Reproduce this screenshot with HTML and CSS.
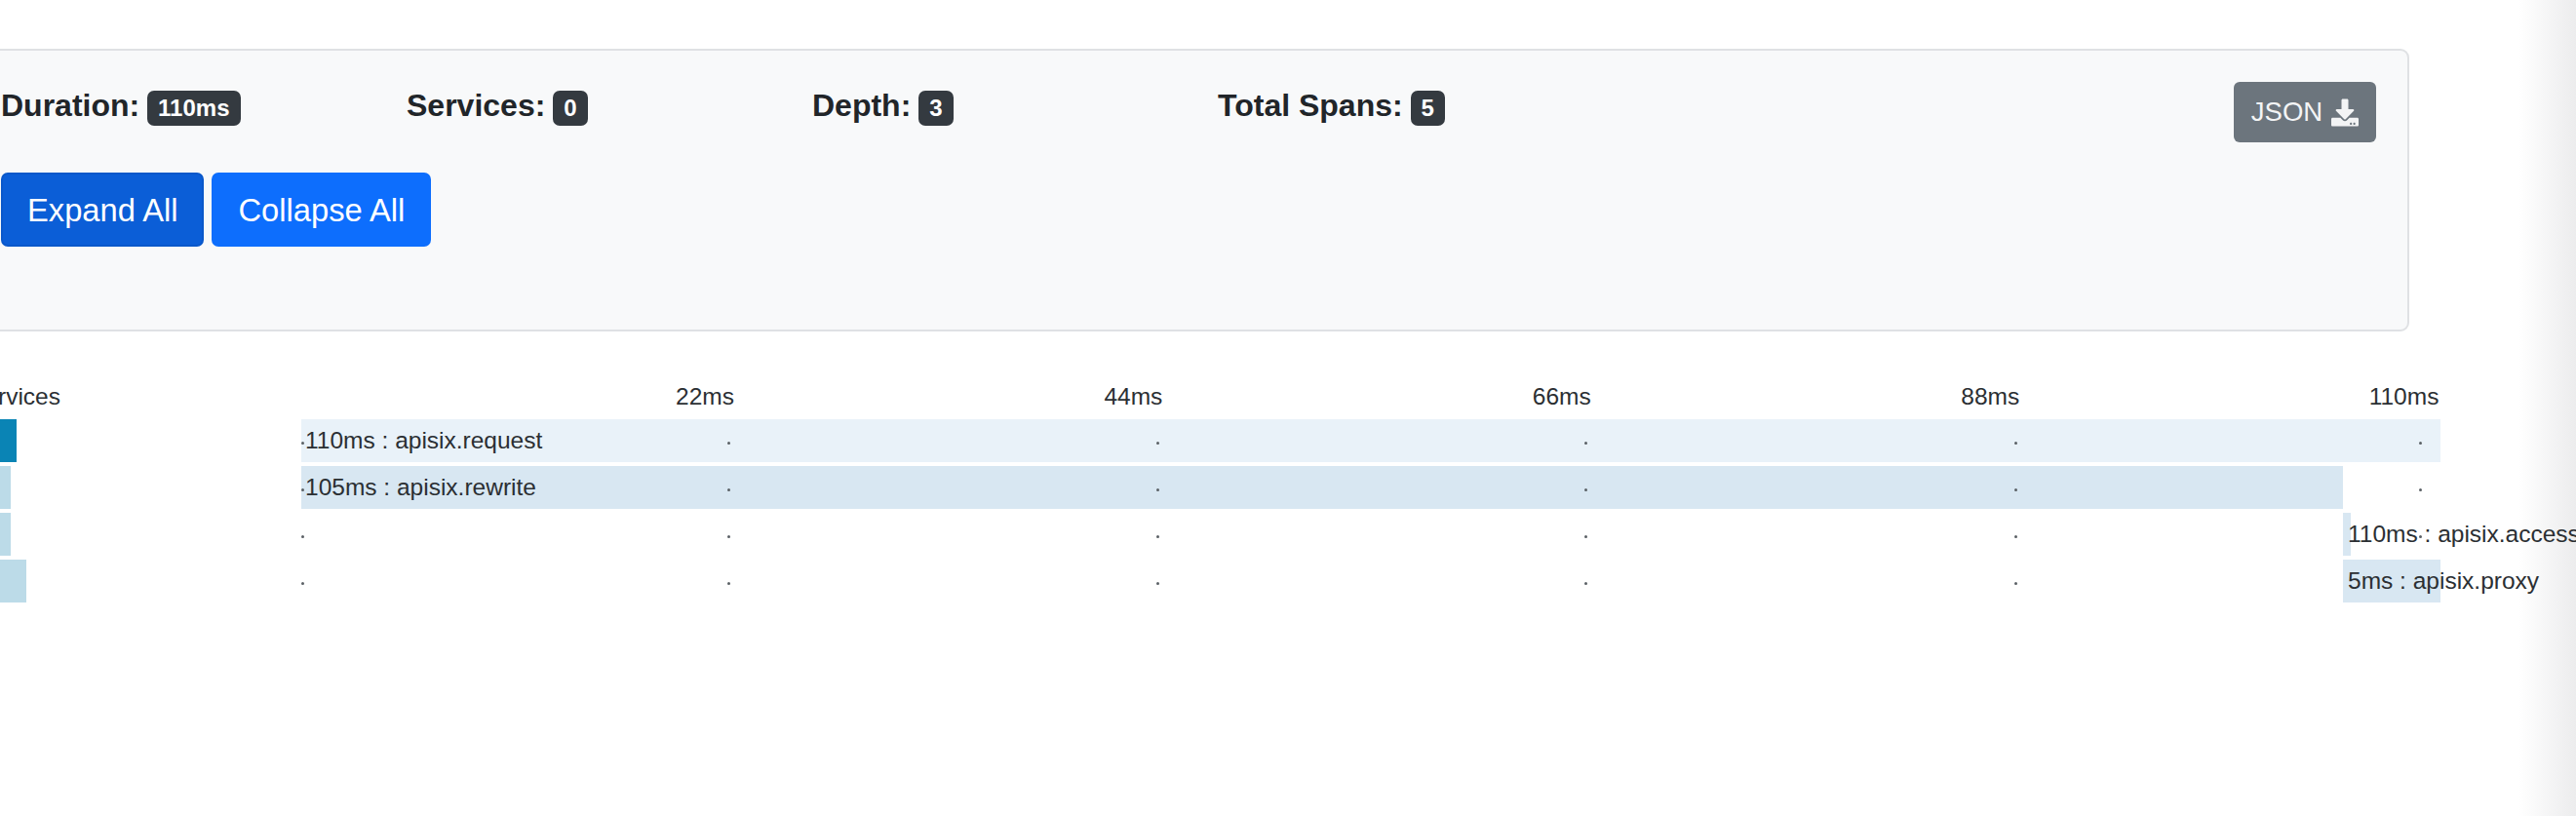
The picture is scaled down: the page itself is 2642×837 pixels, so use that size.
FILE: index.html
```html
<!DOCTYPE html>
<html lang="en">
<head>
<meta charset="utf-8">
<title>Trace</title>
<link rel="stylesheet" href="styles.css">
</head>
<body>
<section class="summary">
  <div class="summary-top">
    <div class="stats">
      <div class="stat">Duration: <span class="badge">110ms</span></div>
      <div class="stat">Services: <span class="badge">0</span></div>
      <div class="stat">Depth: <span class="badge">3</span></div>
      <div class="stat">Total Spans: <span class="badge">5</span></div>
    </div>
    <button class="btn-json">JSON
      <svg class="icon" viewBox="0 0 512 512" aria-hidden="true"><path fill="currentColor" d="M216 0h80c13.3 0 24 10.7 24 24v168h87.7c17.8 0 26.7 21.5 14.1 34.1L269.7 378.3c-7.5 7.5-19.8 7.5-27.3 0L90.1 226.1c-12.6-12.6-3.7-34.1 14.1-34.1H192V24c0-13.3 10.7-24 24-24zm296 376v112c0 13.3-10.7 24-24 24H24c-13.3 0-24-10.7-24-24V376c0-13.3 10.7-24 24-24h146.7l49 49c20.1 20.1 52.5 20.1 72.6 0l49-49H488c13.3 0 24 10.7 24 24zm-124 88c0-11-9-20-20-20s-20 9-20 20 9 20 20 20 20-9 20-20zm64 0c0-11-9-20-20-20s-20 9-20 20 9 20 20 20 20-9 20-20z"/></svg>
    </button>
  </div>
  <div class="actions">
    <button class="btn btn-active">Expand All</button>
    <button class="btn">Collapse All</button>
  </div>
</section>

<section class="timeline">
  <div class="axis">
    <span class="axis-title">Services</span>
    <div class="axis-ticks">
      <span>22ms</span><span>44ms</span><span>66ms</span><span>88ms</span><span class="last">110ms</span>
    </div>
  </div>

  <div class="row">
    <div class="svc"><div class="svc-bar svc-dark" style="width:17px"></div></div>
    <div class="chart">
      <div class="span span-light" style="margin-left:0;width:2194px"></div>
      <i class="dot d1"></i><i class="dot d2"></i><i class="dot d3"></i><i class="dot d4"></i><i class="dot d5"></i><i class="dot d6"></i>
      <span class="label">110ms : apisix.request</span>
    </div>
  </div>

  <div class="row">
    <div class="svc"><div class="svc-bar" style="width:11px"></div></div>
    <div class="chart">
      <div class="span" style="margin-left:0;width:2094px"></div>
      <i class="dot d1"></i><i class="dot d2"></i><i class="dot d3"></i><i class="dot d4"></i><i class="dot d5"></i><i class="dot d6"></i>
      <span class="label">105ms : apisix.rewrite</span>
    </div>
  </div>

  <div class="row">
    <div class="svc"><div class="svc-bar" style="width:11px"></div></div>
    <div class="chart">
      <div class="span" style="margin-left:2094px;width:8px"></div>
      <i class="dot d1"></i><i class="dot d2"></i><i class="dot d3"></i><i class="dot d4"></i><i class="dot d5"></i><i class="dot d6"></i>
      <span class="label label-end">110ms : apisix.access</span>
    </div>
  </div>

  <div class="row">
    <div class="svc"><div class="svc-bar" style="width:27px"></div></div>
    <div class="chart">
      <div class="span" style="margin-left:2094px;width:100px"></div>
      <i class="dot d1"></i><i class="dot d2"></i><i class="dot d3"></i><i class="dot d4"></i><i class="dot d5"></i>
      <span class="label label-end">5ms : apisix.proxy</span>
    </div>
  </div>
</section>
</body>
</html>
```
FILE: styles.css
```css
* { box-sizing: border-box; }

html, body {
  margin: 0;
  height: 100%;
  overflow: hidden;
}

body {
  font-family: "Liberation Sans", Arial, sans-serif;
  color: #2b2f33;
  font-size: 24.5px;
  width: 2642px;
  background: linear-gradient(to right, #fff 2583px, #ececed 2642px);
}

.summary {
  width: 2491px;
  height: 290px;
  margin: 50px 0 0 -20px;
  padding: 31px 32px 0 19px;
  background: #f8f9fa;
  border: 2px solid #dfe1e4;
  border-radius: 9px;
}

.summary-top {
  display: flex;
  justify-content: space-between;
  align-items: flex-start;
}

.stats { display: flex; padding-top: 5px; }

.stat {
  width: 416px;
  font-size: 32px;
  font-weight: 700;
  line-height: 40px;
  white-space: nowrap;
  color: #212529;
}

.badge {
  display: inline-block;
  padding: 6px 11px;
  margin-left: -1px;
  min-width: 34px;
  text-align: center;
  font-size: 24px;
  line-height: 24px;
  color: #fff;
  background: #343a40;
  border-radius: 7px;
  vertical-align: 0;
}

.btn-json {
  display: flex;
  align-items: center;
  justify-content: center;
  gap: 9px;
  width: 146px;
  height: 62px;
  margin-top: 1px;
  padding: 0;
  font: 27.5px "Liberation Sans", Arial, sans-serif;
  color: #f3f4f5;
  background: #6c757d;
  border: 0;
  border-radius: 6px;
}

.icon { width: 28px; height: 29px; }

.actions {
  display: flex;
  gap: 8px;
  margin-top: 31px;
}

.btn {
  height: 76px;
  padding: 2px 25px 0;
  font: 32.7px "Liberation Sans", Arial, sans-serif;
  color: #fff;
  background: #0d6efd;
  border: 2px solid #0d6efd;
  border-radius: 7px;
}

.btn-active {
  background: #0b5ed7;
  border-color: #0a58ca;
}

.timeline { margin-top: 53px; }

.axis {
  display: flex;
  height: 37px;
  line-height: 28px;
  white-space: nowrap;
}

.axis-title {
  flex: none;
  width: 341px;
  margin-left: -32px;
}

.axis-ticks {
  display: flex;
  gap: 379.5px;
  padding-left: 384px;
}

.axis-ticks .last { margin-left: -21px; }

.row {
  display: flex;
  height: 44px;
  margin-bottom: 4px;
}

.svc { width: 309px; flex: none; }

.svc-bar { height: 100%; background: #bcdbe8; }

.svc-dark { background: #0a84b5; }

.chart {
  position: relative;
  width: 2194px;
  flex: none;
}

.span { height: 100%; background: #d8e7f2; }

.span-light { background: #e9f2f9; }

.label {
  position: absolute;
  top: 0;
  left: 4px;
  line-height: 44px;
  white-space: nowrap;
}

.label-end { left: 2099px; }

.dot {
  position: absolute;
  top: 23px;
  width: 3px;
  height: 3px;
  background: #5b6166;
  border-radius: 50%;
}

.d1 { left: 0; }
.d2 { left: 437px; }
.d3 { left: 877px; }
.d4 { left: 1316px; }
.d5 { left: 1757px; }
.d6 { left: 2172px; }
```
